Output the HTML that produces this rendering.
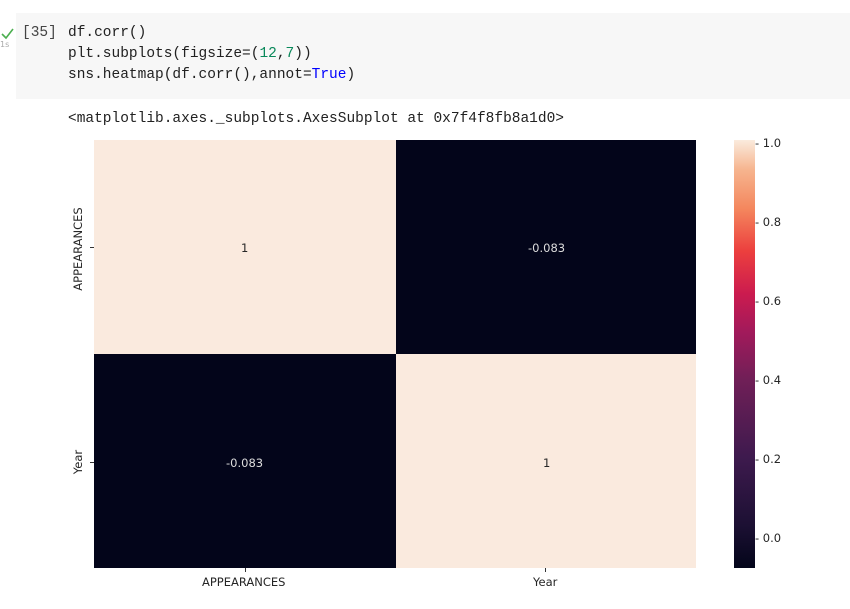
<!DOCTYPE html>
<html><head><style>
body{margin:0;width:850px;height:609px;background:#fff;position:relative;overflow:hidden;font-family:"DejaVu Sans","Liberation Sans",sans-serif}
.a{position:absolute}
.code{left:16px;top:13px;width:834px;height:86px;background:#f7f7f7}
.m{font-family:"Liberation Mono","DejaVu Sans Mono",monospace;font-size:14.5px;color:#212121;white-space:pre;line-height:21px}
.t{font-size:11.5px;color:#262626}
</style></head><body>
<div class="a code"></div>
<svg class="a" style="left:0;top:26px" width="16" height="14"><path d="M2 8 L6 12 L13 3" stroke="#4caf50" stroke-width="1.6" fill="none"/></svg>
<div class="a" style="left:0;top:40px;font-size:8px;color:#aaa">1s</div>
<div class="a m" style="left:22px;top:23px;color:#444">[35]</div>
<div class="a m" style="left:68px;top:23px">df.corr()
plt.subplots(figsize=(<span style="color:#09885a">12</span>,<span style="color:#09885a">7</span>))
sns.heatmap(df.corr(),annot=<span style="color:#0000ff">True</span>)</div>
<div class="a m" style="left:68px;top:109px">&lt;matplotlib.axes._subplots.AxesSubplot at 0x7f4f8fb8a1d0&gt;</div>
<div class="a" style="left:94px;top:140px;width:302px;height:214px;background:#faeade"></div>
<div class="a" style="left:396px;top:140px;width:300px;height:214px;background:#03051a"></div>
<div class="a" style="left:94px;top:354px;width:302px;height:214px;background:#03051a"></div>
<div class="a" style="left:396px;top:354px;width:300px;height:214px;background:#faeade"></div>
<div class="a t" style="left:241px;top:241px">1</div>
<div class="a t" style="left:528px;top:241px;color:#ddd">-0.083</div>
<div class="a t" style="left:226px;top:456px;color:#ddd">-0.083</div>
<div class="a t" style="left:543px;top:456px">1</div>
<div class="a" style="left:90px;top:247px;width:4px;height:1px;background:#333"></div>
<div class="a" style="left:90px;top:462px;width:4px;height:1px;background:#333"></div>
<div class="a" style="left:245px;top:568px;width:1px;height:4px;background:#333"></div>
<div class="a" style="left:545px;top:568px;width:1px;height:4px;background:#333"></div>
<div class="a t" style="left:202px;top:575px">APPEARANCES</div>
<div class="a t" style="left:533px;top:575px">Year</div>
<div class="a t" style="left:28px;top:242px;transform:rotate(-90deg);width:100px;text-align:center">APPEARANCES</div>
<div class="a t" style="left:58px;top:455px;transform:rotate(-90deg);width:40px;text-align:center">Year</div>
<div class="a" style="left:734px;top:140px;width:21px;height:428px;background:linear-gradient(to top,#03051a 0%,#1c1033 10%,#3e1a4e 26%,#701f57 44%,#a11a5b 55%,#cb1b4f 64%,#ec3f3e 74%,#f4875e 84%,#f6b48e 93%,#faebdd 100%)"></div>
<div class="a t" style="left:755px;top:137px;line-height:12px">- 1.0</div>
<div class="a t" style="left:755px;top:216px;line-height:12px">- 0.8</div>
<div class="a t" style="left:755px;top:295px;line-height:12px">- 0.6</div>
<div class="a t" style="left:755px;top:374px;line-height:12px">- 0.4</div>
<div class="a t" style="left:755px;top:453px;line-height:12px">- 0.2</div>
<div class="a t" style="left:755px;top:532px;line-height:12px">- 0.0</div>
</body></html>
